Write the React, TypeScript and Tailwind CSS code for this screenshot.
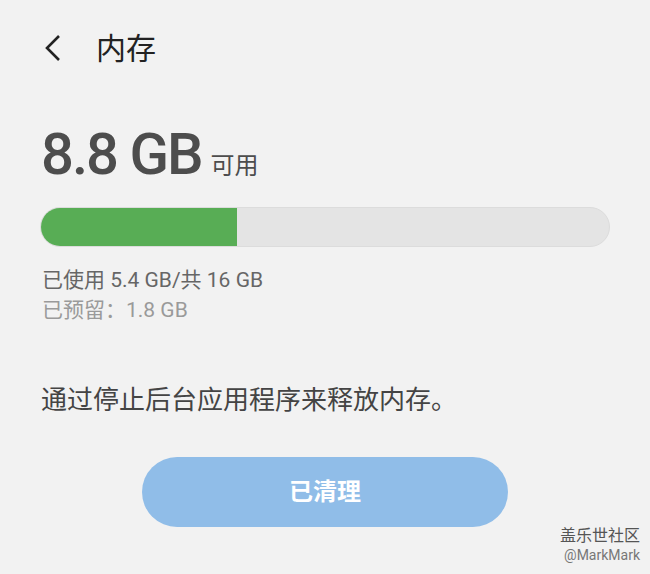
import React from 'react';

const FONT = { fontFamily: 'Roboto, "Noto Sans CJK SC", sans-serif' };

export default function App() {
  const used = 5.4;
  const total = 16;

  return (
    <div className="relative w-[650px] h-[574px] overflow-hidden bg-[#f2f2f2]" style={FONT}>
      {/* Header */}
      <div className="flex items-center h-[100px] pl-[44px] pb-[2px]">
        <svg width="18" height="28" viewBox="0 0 18 28" className="mt-[-2px]">
          <polyline points="15,2 3,14 15,26" fill="none" stroke="#222" strokeWidth="2.6" strokeLinejoin="miter" />
        </svg>
        <h1 className="ml-[34px] text-[30px] leading-none text-[#222] font-normal">内存</h1>
      </div>

      <div className="px-[40px]">
        {/* Available */}
        <div className="flex items-baseline mt-[25px] ml-[1px]">
          <span className="text-[58px] leading-none font-medium text-[#4d4d4d] tracking-[-2px]">8.8 GB</span>
          <span className="ml-[9px] text-[24px] leading-none text-[#4d4d4d]">可用</span>
        </div>

        {/* Usage bar */}
        <div className="mt-[24px] h-[40px] w-[570px] rounded-full bg-[#e4e4e4] border border-[#dcdcdc] overflow-hidden flex">
          <div className="h-full bg-[#58ad55]" style={{ width: `${(used / total) * 100 + 0.8}%` }} />
        </div>

        <div className="mt-[18px] ml-[2px] text-[21px] leading-[30px]">
          <div className="text-[#666]">已使用 5.4 GB/共 16 GB</div>
          <div className="text-[#9a9a9a]">已预留：1.8 GB</div>
        </div>

        <p className="mt-[62px] ml-[1px] text-[26px] leading-none text-[#444]">通过停止后台应用程序来释放内存。</p>

        <div className="flex justify-center mt-[44px]">
          <button className="w-[366px] h-[70px] rounded-full bg-[#90bde8] text-white text-[24px] font-bold">
            已清理
          </button>
        </div>
      </div>

      {/* Watermark */}
      <div className="absolute right-[10px] bottom-[12px] text-right leading-none">
        <div className="text-[16px] text-[#555]">盖乐世社区</div>
        <div className="mt-[4px] text-[14px] text-[#777]">@MarkMark</div>
      </div>
    </div>
  );
}
